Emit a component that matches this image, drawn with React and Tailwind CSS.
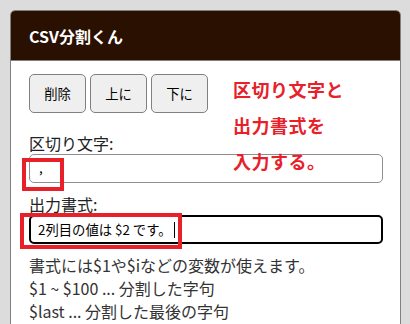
export default function App() {
  const font = { fontFamily: '"Noto Sans CJK JP", "Noto Sans", sans-serif' };
  return (
    <div className="min-h-screen bg-[#dcdcdc] pt-[10px] pl-[10px] overflow-hidden h-[324px] w-[410px]" style={font}>
      <div className="relative w-[391px] border border-[#808080] rounded-t-[5px] bg-white">
        <div className="h-[49px] bg-[#2a1000] rounded-t-[4px] border-b border-[#808080] flex items-center pl-[18px] box-content">
          <span className="text-white font-bold text-[16px] leading-none">CSV分割くん</span>
        </div>
        <div className="pl-[18px] pr-[17px] pt-[13px] pb-6 text-[#222]">
          <div className="flex gap-[4px]">
            {['削除', '上に', '下に'].map((t) => (
              <button key={t} className="w-[57px] h-[39px] bg-[#efefef] border border-[#808080] rounded-[5px] text-[13.33px] text-black">
                {t}
              </button>
            ))}
          </div>
          <div className="mt-[19px] text-[16px] leading-[22px]">区切り文字:</div>
          <div className="h-[29px] border border-[#8f8f8f] rounded-[5px] px-[9px] text-[13.33px] leading-[25px] text-black">,</div>
          <div className="mt-[10px] text-[16px] leading-[22px]">出力書式:</div>
          <div className="h-[29px] border-2 border-black rounded-[5px] px-[7px] text-[13.33px] leading-[25px] text-black flex items-center">
            <span>2列目の値は $2 です。</span>
            <span className="ml-[3px] inline-block w-px h-[16px] bg-black"></span>
          </div>
          <div className="mt-[10px] text-[16px] leading-[23px] text-[#333]">
            <div>書式には$1や$iなどの変数が使えます。</div>
            <div>$1 ~ $100 ... 分割した字句</div>
            <div>$last ... 分割した最後の字句</div>
          </div>
        </div>
        <div className="absolute left-[222px] top-[60px] text-[18px] leading-[36px] font-bold text-[#e8202a] tracking-[0.5px]">
          <div>区切り文字と</div>
          <div>出力書式を</div>
          <div>入力する。</div>
        </div>
        <div className="absolute left-[11px] top-[147px] w-[42px] h-[33px] border-4 border-[#e8202a]"></div>
        <div className="absolute left-[9px] top-[202px] w-[162px] h-[36px] border-4 border-[#e8202a]"></div>
      </div>
    </div>
  );
}
